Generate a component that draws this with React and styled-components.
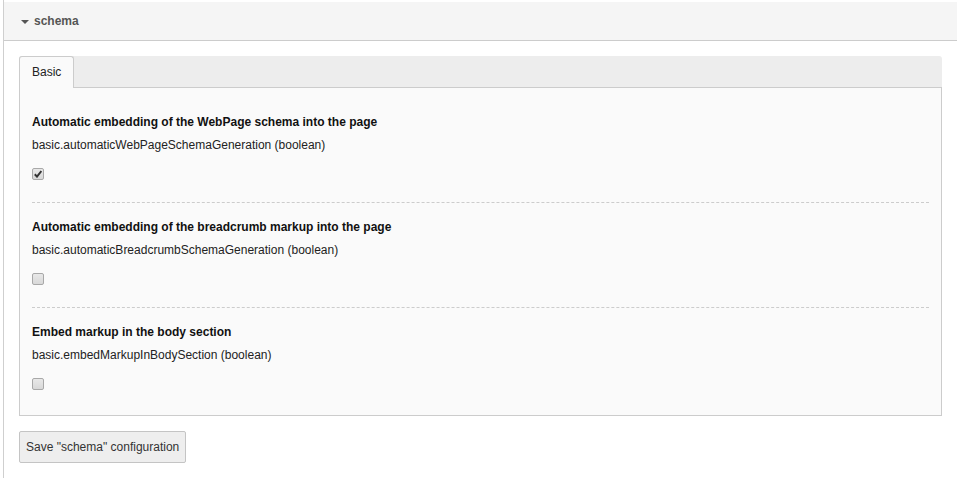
import React from "react";
import styled, { createGlobalStyle } from "styled-components";

const Global = createGlobalStyle`
  html, body { margin: 0; padding: 0; background: #fff; }
  body {
    font-family: "Liberation Sans", Arial, sans-serif;
    font-size: 12px;
    color: #333;
  }
`;

const Frame = styled.div`
  margin-left: 3px;
  border-left: 1px solid #cfcfcf;
  padding-top: 2px;
  margin-right: 2px;
  min-height: 100vh;
  box-sizing: border-box;
`;

const Header = styled.div`
  height: 38px;
  background: #f5f5f5;
  border-bottom: 1px solid #cccccc;
  display: flex;
  align-items: center;
  padding-left: 17px;
  gap: 5px;
  font-weight: bold;
  color: #555;
  font-size: 12px;
`;

const Caret = styled.span`
  width: 0;
  height: 0;
  border-left: 4px solid transparent;
  border-right: 4px solid transparent;
  border-top: 4px solid #555;
  margin-top: 1px;
`;

const Body = styled.div`
  padding: 15px;
`;

const TabBar = styled.div`
  display: flex;
  background: #ededed;
  border-radius: 3px 3px 0 0;
  border-bottom: 1px solid #cccccc;
  height: 31px;
`;

const Tab = styled.div`
  background: #fafafa;
  border: 1px solid #cccccc;
  border-bottom: none;
  border-radius: 3px 3px 0 0;
  padding: 0 12px 2px;
  display: flex;
  align-items: center;
  color: #222;
  margin-bottom: -1px;
  box-sizing: border-box;
  height: 32px;
`;

const Panel = styled.div`
  background: #fafafa;
  border: 1px solid #cccccc;
  border-top: none;
  padding: 10px 12px 3px;
`;

const Item = styled.div`
  padding: 16px 0 22px;
  border-bottom: 1px dashed #cccccc;
  &:last-child { border-bottom: none; }
`;

const Title = styled.div`
  font-weight: bold;
  color: #111;
  line-height: 16px;
`;

const Desc = styled.div`
  margin-top: 7px;
  line-height: 16px;
  color: #222;
`;

const Check = styled.span`
  display: block;
  margin-top: 15px;
  width: 12px;
  height: 12px;
  box-sizing: border-box;
  border: 1px solid #a8a8a8;
  border-radius: 2px;
  background: linear-gradient(#e8e8e8, #d8d8d8);
  position: relative;
  svg { position: absolute; left: 1px; top: 1px; }
`;

const Button = styled.button`
  display: block;
  margin-top: 15px;
  height: 32px;
  padding: 0 6px;
  font-family: "Liberation Sans", Arial, sans-serif;
  font-size: 12px;
  color: #333;
  background: #eeeeee;
  border: 1px solid #c4c4c4;
  border-radius: 2px;
  cursor: pointer;
`;

const items = [
  {
    title: "Automatic embedding of the WebPage schema into the page",
    desc: "basic.automaticWebPageSchemaGeneration (boolean)",
    checked: true,
  },
  {
    title: "Automatic embedding of the breadcrumb markup into the page",
    desc: "basic.automaticBreadcrumbSchemaGeneration (boolean)",
    checked: false,
  },
  {
    title: "Embed markup in the body section",
    desc: "basic.embedMarkupInBodySection (boolean)",
    checked: false,
  },
];

export default function App() {
  return (
    <>
      <Global />
      <Frame>
        <Header>
          <Caret />
          <span>schema</span>
        </Header>
        <Body>
          <TabBar>
            <Tab>Basic</Tab>
          </TabBar>
          <Panel>
            {items.map((it) => (
              <Item key={it.desc}>
                <Title>{it.title}</Title>
                <Desc>{it.desc}</Desc>
                <Check>
                  {it.checked && (
                    <svg width="8" height="8" viewBox="0 0 8 8">
                      <path d="M0.8 4.3 L3 6.6 L7.4 1" fill="none" stroke="#333" strokeWidth="2" />
                    </svg>
                  )}
                </Check>
              </Item>
            ))}
          </Panel>
          <Button>Save "schema" configuration</Button>
        </Body>
      </Frame>
    </>
  );
}
